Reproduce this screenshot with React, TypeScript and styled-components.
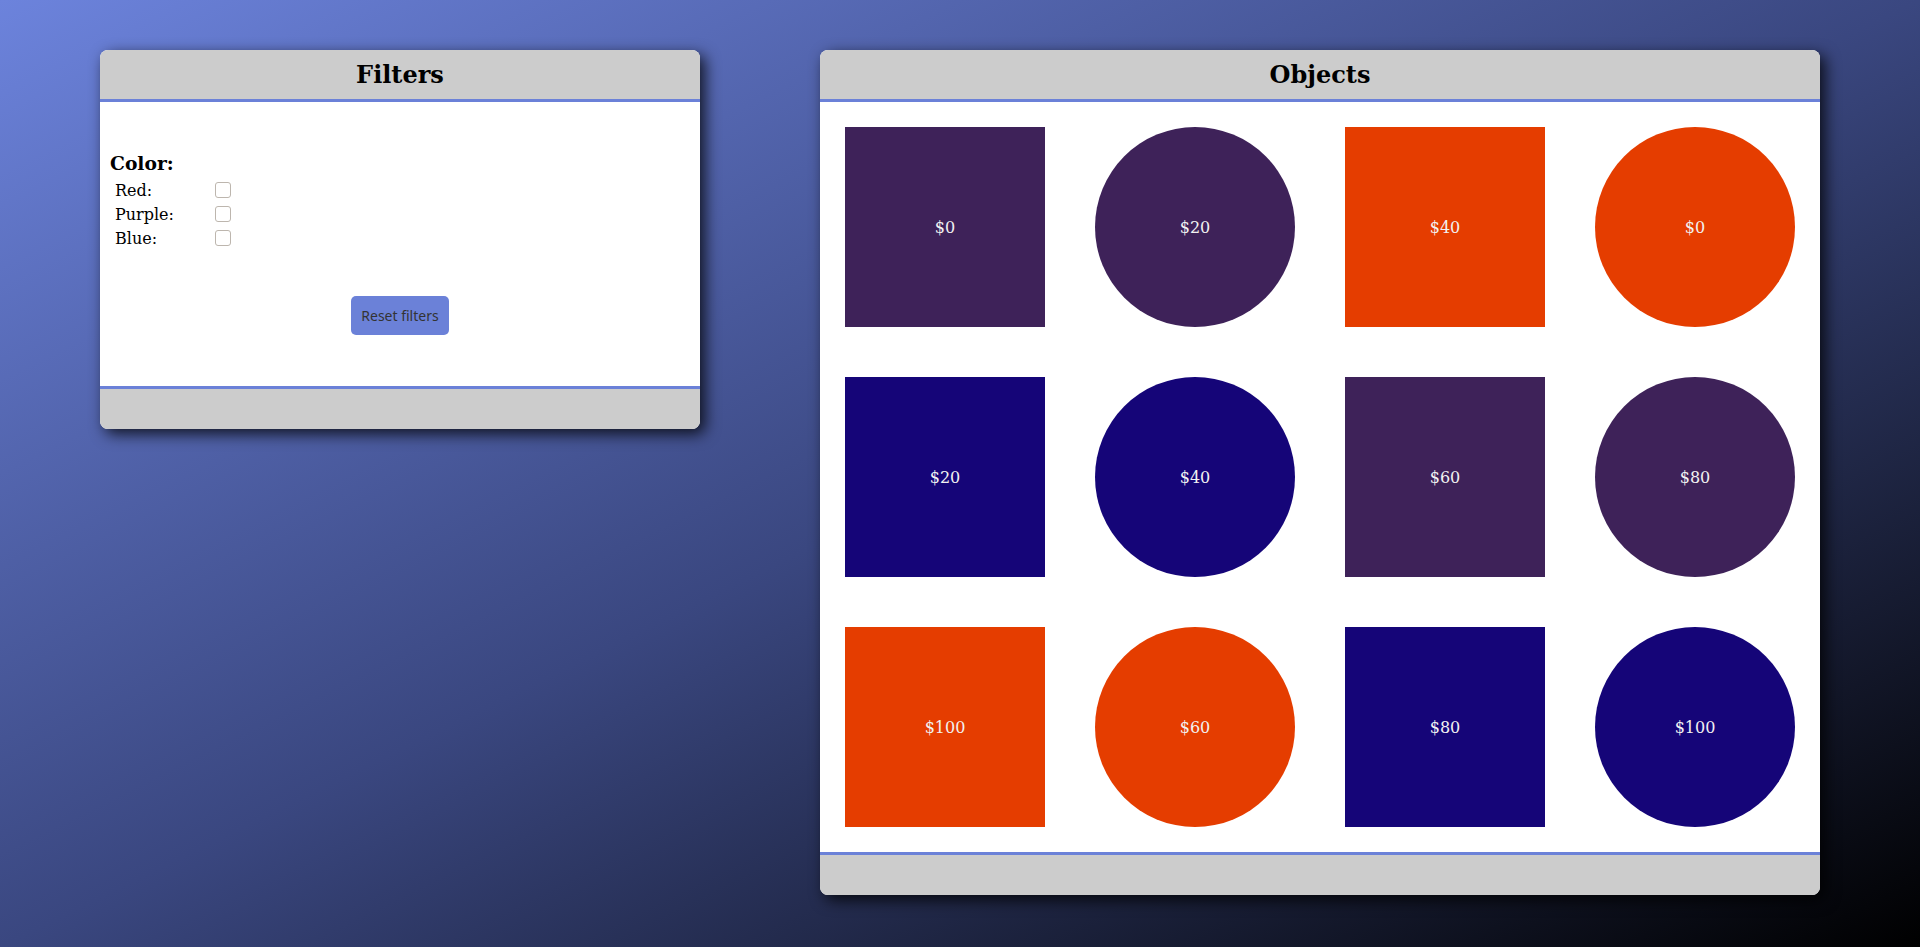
import React from "react";
import styled, { createGlobalStyle } from "styled-components";

const ACCENT = "#6b81d8";

const GlobalStyle = createGlobalStyle`
  html, body { margin: 0; padding: 0; }
  body {
    min-height: 100vh;
    background: linear-gradient(to bottom right, #6c83dc 0%, #3a4780 50%, #000000 100%);
    font-family: "DejaVu Serif", serif;
  }
`;

const Page = styled.div`
  min-height: 100vh;
  box-sizing: border-box;
  display: flex;
  align-items: flex-start;
  justify-content: space-between;
  padding: 50px 100px;
`;

const Panel = styled.section<{ $width: number }>`
  width: ${(p) => p.$width}px;
  display: flex;
  flex-direction: column;
  background: #fff;
  border-radius: 8px;
  overflow: hidden;
  box-shadow: 5px 5px 15px rgba(0, 0, 0, 0.8);
`;

const PanelHeader = styled.header`
  height: 49px;
  background: #cccccc;
  border-bottom: 3px solid ${ACCENT};
  display: flex;
  align-items: center;
  justify-content: center;
`;

const PanelTitle = styled.h2`
  margin: 0;
  font-family: "DejaVu Serif", serif;
  font-weight: bold;
  font-size: 24px;
  color: #000;
`;

const PanelFooter = styled.footer`
  height: 40px;
  background: #cccccc;
  border-top: 3px solid ${ACCENT};
`;

const FilterBody = styled.div`
  height: 284px;
  box-sizing: border-box;
  padding: 50px 10px 0;
  display: flex;
  flex-direction: column;
`;

const GroupHeading = styled.h3`
  margin: 0 0 4px;
  font-size: 18.72px;
  line-height: 22px;
  font-weight: bold;
  color: #000;
`;

const FilterRow = styled.label`
  display: flex;
  align-items: center;
  height: 24px;
  padding-left: 5px;
  font-size: 16px;
  color: #000;
`;

const RowLabel = styled.span`
  width: 100px;
`;

const Checkbox = styled.input`
  appearance: none;
  margin: 0;
  width: 16px;
  height: 16px;
  box-sizing: border-box;
  border: 1px solid #bdb6ae;
  border-radius: 3px;
  background: #fff;
`;

const ResetButton = styled.button`
  align-self: center;
  margin-top: 46px;
  height: 39px;
  padding: 0 10px;
  border: none;
  border-radius: 5px;
  background: ${ACCENT};
  color: #333;
  font-family: "Noto Sans", sans-serif;
  font-size: 14px;
`;

const ObjectGrid = styled.div`
  padding: 25px;
  display: grid;
  grid-template-columns: repeat(4, 200px);
  grid-auto-rows: 200px;
  gap: 50px;
`;

const Shape = styled.div<{ $color: string; $round: boolean }>`
  width: 200px;
  height: 200px;
  background: ${(p) => p.$color};
  border-radius: ${(p) => (p.$round ? "50%" : "0")};
  display: flex;
  align-items: center;
  justify-content: center;
  color: #f2f2f2;
  font-size: 16px;
`;

const PURPLE = "#3e2259";
const NAVY = "#150578";
const ORANGE = "#e53d00";

const objects = [
  { color: PURPLE, round: false, price: 0 },
  { color: PURPLE, round: true, price: 20 },
  { color: ORANGE, round: false, price: 40 },
  { color: ORANGE, round: true, price: 0 },
  { color: NAVY, round: false, price: 20 },
  { color: NAVY, round: true, price: 40 },
  { color: PURPLE, round: false, price: 60 },
  { color: PURPLE, round: true, price: 80 },
  { color: ORANGE, round: false, price: 100 },
  { color: ORANGE, round: true, price: 60 },
  { color: NAVY, round: false, price: 80 },
  { color: NAVY, round: true, price: 100 },
];

export default function App() {
  return (
    <>
      <GlobalStyle />
      <Page>
        <Panel $width={600}>
          <PanelHeader>
            <PanelTitle>Filters</PanelTitle>
          </PanelHeader>
          <FilterBody>
            <GroupHeading>Color:</GroupHeading>
            {["Red:", "Purple:", "Blue:"].map((c) => (
              <FilterRow key={c}>
                <RowLabel>{c}</RowLabel>
                <Checkbox type="checkbox" />
              </FilterRow>
            ))}
            <ResetButton>Reset filters</ResetButton>
          </FilterBody>
          <PanelFooter />
        </Panel>
        <Panel $width={1000}>
          <PanelHeader>
            <PanelTitle>Objects</PanelTitle>
          </PanelHeader>
          <ObjectGrid>
            {objects.map((o, i) => (
              <Shape key={i} $color={o.color} $round={o.round}>
                ${o.price}
              </Shape>
            ))}
          </ObjectGrid>
          <PanelFooter />
        </Panel>
      </Page>
    </>
  );
}
